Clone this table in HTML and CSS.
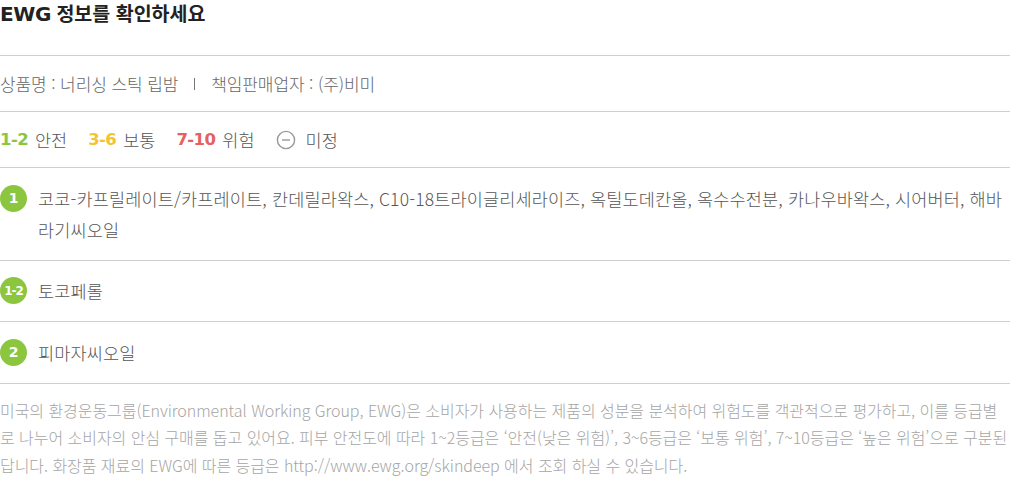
FILE: index.html
```html
<!DOCTYPE html>
<html lang="ko">
<head>
<meta charset="utf-8">
<link rel="stylesheet" href="styles.css">
</head>
<body>
<div class="ewg">
  <h2 class="title"><span class="en">EWG</span> 정보를 확인하세요</h2>
  <div class="row product">
    <span>상품명 : 너리싱 스틱 립밤</span>
    <span class="sep"></span>
    <span>책임판매업자 : (주)비미</span>
  </div>
  <div class="row legend">
    <span class="lg"><b class="g">1-2</b>안전</span>
    <span class="lg"><b class="y">3-6</b>보통</span>
    <span class="lg"><b class="r">7-10</b>위험</span>
    <span class="lg"><span class="minus"><svg width="20" height="20" viewBox="0 0 20 20"><circle cx="10" cy="10" r="8.6" fill="none" stroke="#999" stroke-width="1.4"/><line x1="6" y1="10" x2="14" y2="10" stroke="#999" stroke-width="1.4"/></svg></span>미정</span>
  </div>
  <div class="row item">
    <span class="badge">1</span>
    <p>코코-카프릴레이트/카프레이트, 칸데릴라왁스, C10-18트라이글리세라이즈, 옥틸도데칸올, 옥수수전분, 카나우바왁스, 시어버터, 해바라기씨오일</p>
  </div>
  <div class="row item">
    <span class="badge small">1-2</span>
    <p>토코페롤</p>
  </div>
  <div class="row item">
    <span class="badge">2</span>
    <p>피마자씨오일</p>
  </div>
  <p class="note">미국의 환경운동그룹(Environmental Working Group, EWG)은 소비자가 사용하는 제품의 성분을 분석하여 위험도를 객관적으로 평가하고, 이를 등급별로 나누어 소비자의 안심 구매를 돕고 있어요. 피부 안전도에 따라 1~2등급은 ‘안전(낮은 위험)’, 3~6등급은 ‘보통 위험’, 7~10등급은 ‘높은 위험’으로 구분된답니다. 화장품 재료의 EWG에 따른 등급은 http://www.ewg.org/skindeep 에서 조회 하실 수 있습니다.</p>
</div>
</body>
</html>
```
FILE: styles.css
```css
html, body {
  margin: 0;
  padding: 0;
  background: #fff;
}
body {
  font-family: "Noto Sans CJK KR", "Noto Sans", sans-serif;
  color: #555;
}
.ewg {
  width: 1010px;
}
.title {
  margin: 0;
  height: 55px;
  box-sizing: border-box;
  font-size: 19.5px;
  line-height: 26px;
  font-weight: 700;
  color: #222;
}
.title .en {
  font-family: "DejaVu Sans", sans-serif;
  font-size: 20px;
  letter-spacing: -0.4px;
}
.row {
  border-top: 1px solid #cfcfcf;
  display: flex;
  align-items: center;
  box-sizing: border-box;
}
.product {
  height: 56px;
  font-size: 17px;
  font-weight: 300;
  color: #666;
  gap: 16px;
  letter-spacing: -0.1px;
}
.product .sep {
  width: 1px;
  height: 12px;
  background: #777;
}
.legend {
  height: 56px;
  font-size: 17.5px;
  font-weight: 300;
  color: #555;
  gap: 21px;
}
.lg {
  display: flex;
  align-items: center;
}
.lg b {
  font-family: "DejaVu Sans", sans-serif;
  font-weight: 700;
  font-size: 16.5px;
  margin-right: 7px;
  letter-spacing: -0.6px;
}
.g { color: #8cc63e; }
.y { color: #f4c430; }
.r { color: #e5605f; }
.minus {
  display: flex;
  margin-right: 10px;
}
.item {
  align-items: flex-start;
  padding: 14.5px 0 15px;
  gap: 11px;
}
.item p {
  margin: 0;
  font-size: 17.5px;
  line-height: 31px;
  font-weight: 300;
  color: #555;
  letter-spacing: 0.15px;
}
.badge {
  flex: none;
  width: 27px;
  height: 27px;
  border-radius: 50%;
  background: #8cc63e;
  color: #fff;
  font-family: "DejaVu Sans", sans-serif;
  font-weight: 700;
  font-size: 14px;
  display: flex;
  align-items: center;
  justify-content: center;
  margin-top: 2px;
  overflow: hidden;
}
.badge.small {
  font-size: 12px;
  letter-spacing: -1px;
}
.note {
  margin: 0;
  border-top: 1px solid #cfcfcf;
  padding-top: 13px;
  font-size: 16px;
  line-height: 27.5px;
  font-weight: 300;
  color: #a5a5a5;
  letter-spacing: -0.05px;
}
```
